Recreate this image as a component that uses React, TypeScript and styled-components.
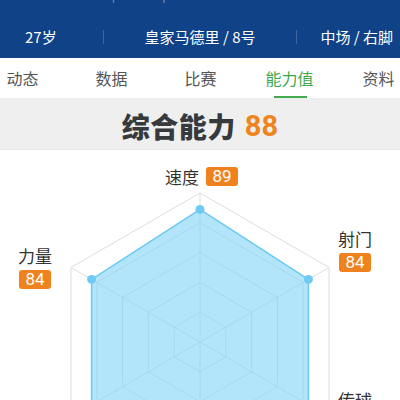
import styled, { createGlobalStyle } from "styled-components";

const GlobalStyle = createGlobalStyle`
  html, body {
    margin: 0;
    padding: 0;
    background: #ffffff;
    overflow: hidden;
  }
  body {
    font-family: "Noto Sans CJK SC", "Noto Sans", sans-serif;
  }
`;

const tabs = ["动态", "数据", "比赛", "能力值", "资料"];

// stats clockwise from the top vertex
const stats = [
  { name: "速度", value: 89 },
  { name: "射门", value: 84 },
  { name: "传球", value: 84 },
  { name: "防守", value: 62 },
  { name: "盘带", value: 84 },
  { name: "力量", value: 84 },
];

const CX = 200;
const CY = 192;
const R = 149;

function point(i: number, r: number) {
  const a = ((-90 + i * 60) * Math.PI) / 180;
  return [CX + r * Math.cos(a), CY + r * Math.sin(a)];
}

function hexPath(r: number) {
  return stats.map((_, i) => point(i, r).join(",")).join(" ");
}

function RadarChart() {
  const levels = [0.2, 0.4, 0.6, 0.8, 1];
  const dataPts = stats.map((s, i) => point(i, (R * s.value) / 100));
  return (
    <svg width="400" height="300" viewBox="0 0 400 300">
      {levels.map((l) => (
        <polygon
          key={l}
          points={hexPath(R * l)}
          fill="none"
          stroke="#dedede"
          strokeWidth="1"
        />
      ))}
      {stats.map((_, i) => {
        const [x, y] = point(i, R);
        return (
          <line key={i} x1={CX} y1={CY} x2={x} y2={y} stroke="#dedede" strokeWidth="1" />
        );
      })}
      <polygon
        points={dataPts.map((p) => p.join(",")).join(" ")}
        fill="#7fd3f7"
        fillOpacity="0.6"
        stroke="#6cc9f2"
        strokeWidth="1.5"
      />
      {dataPts.map(([x, y], i) => (
        <circle key={i} cx={x} cy={y} r="4.5" fill="#6fcaf4" />
      ))}
    </svg>
  );
}

export default function App() {
  return (
    <Page>
      <GlobalStyle />
      <Header>
        <TopStrip>
          <TopText>托尼·克罗斯 &nbsp;|&nbsp; 德国 &nbsp;|&nbsp; 183cm</TopText>
        </TopStrip>
        <InfoRow>
          <InfoCell $align="left">27岁</InfoCell>
          <Divider />
          <InfoCell $align="center">皇家马德里 / 8号</InfoCell>
          <Divider />
          <InfoCell $align="right">中场 / 右脚</InfoCell>
        </InfoRow>
      </Header>

      <TabBar>
        {tabs.map((t) => (
          <Tab key={t} $active={t === "能力值"}>
            {t}
          </Tab>
        ))}
      </TabBar>

      <Overall>
        <OverallTitle>综合能力</OverallTitle>
        <OverallValue>88</OverallValue>
      </Overall>

      <ChartArea>
        <RadarChart />
        <InlineLabel style={{ left: 165, top: 16 }}>
          <LabelText>速度</LabelText>
          <Badge>89</Badge>
        </InlineLabel>
        <StackLabel style={{ left: 338, top: 78 }}>
          <LabelText>射门</LabelText>
          <Badge>84</Badge>
        </StackLabel>
        <StackLabel style={{ left: 18, top: 95 }}>
          <LabelText>力量</LabelText>
          <Badge>84</Badge>
        </StackLabel>
        <StackLabel style={{ left: 338, top: 239 }}>
          <LabelText>传球</LabelText>
          <Badge>84</Badge>
        </StackLabel>
      </ChartArea>
    </Page>
  );
}

const Page = styled.div`
  width: 400px;
  height: 400px;
  overflow: hidden;
  background: #ffffff;
`;

const Header = styled.div`
  background: #0f4287;
  color: #ffffff;
`;

const TopStrip = styled.div`
  height: 16px;
  overflow: hidden;
`;

const TopText = styled.div`
  margin-top: -20px;
  padding-left: 8px;
  font-size: 16px;
  line-height: 22px;
  color: rgba(255, 255, 255, 0.45);
  white-space: nowrap;
`;

const InfoRow = styled.div`
  height: 42px;
  display: grid;
  grid-template-columns: 103px 1px 1fr 1px 103px;
  align-items: center;
`;

const InfoCell = styled.div<{ $align: "left" | "center" | "right" }>`
  font-size: 15px;
  line-height: 22px;
  white-space: nowrap;
  text-align: ${(p) => p.$align};
  padding-left: ${(p) => (p.$align === "left" ? "25px" : "0")};
  padding-right: ${(p) => (p.$align === "right" ? "7px" : "0")};
`;

const Divider = styled.div`
  height: 14px;
  background: rgba(255, 255, 255, 0.2);
`;

const TabBar = styled.div`
  height: 40px;
  display: flex;
  margin-left: -22px;
  background: #ffffff;
`;

const Tab = styled.div<{ $active?: boolean }>`
  position: relative;
  flex: 0 0 89px;
  display: flex;
  align-items: center;
  justify-content: center;
  font-size: 16px;
  color: ${(p) => (p.$active ? "#3eaa4c" : "#555555")};

  &::after {
    content: "";
    display: ${(p) => (p.$active ? "block" : "none")};
    position: absolute;
    bottom: 0;
    left: 50%;
    width: 33px;
    height: 2px;
    margin-left: -16px;
    background: #45a94f;
  }
`;

const Overall = styled.div`
  height: 52px;
  box-sizing: border-box;
  padding-top: 4px;
  background: #efefef;
  border-bottom: 1px solid #e6e6e6;
  display: flex;
  align-items: center;
  justify-content: center;
  gap: 9px;
`;

const OverallTitle = styled.span`
  font-size: 28px;
  font-weight: 900;
  color: #363a3c;
  letter-spacing: 0.5px;
`;

const OverallValue = styled.span`
  font-family: "Roboto", "Liberation Sans", sans-serif;
  font-size: 29px;
  font-weight: 700;
  color: #f0841c;
`;

const ChartArea = styled.div`
  position: relative;
  height: 300px;
  background: #ffffff;
`;

const InlineLabel = styled.div`
  position: absolute;
  display: flex;
  align-items: center;
  gap: 7px;
`;

const StackLabel = styled.div`
  position: absolute;
  display: flex;
  flex-direction: column;
  align-items: center;
  gap: 4px;
`;

const LabelText = styled.span`
  font-size: 17px;
  line-height: 21px;
  color: #333333;
`;

const Badge = styled.span`
  display: inline-block;
  width: 32px;
  height: 19px;
  border-radius: 3px;
  background: #f0821e;
  color: #ffffff;
  font-family: "Roboto", "Liberation Sans", sans-serif;
  font-size: 17px;
  line-height: 19px;
  text-align: center;
`;
